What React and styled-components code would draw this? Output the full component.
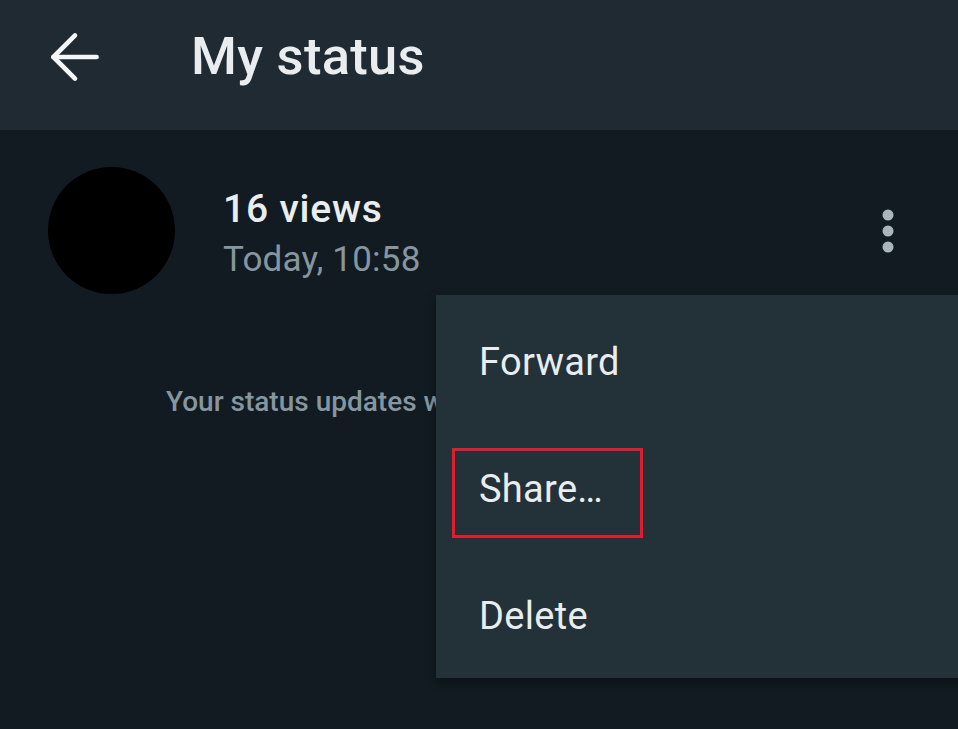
import React from 'react';
import styled, { createGlobalStyle } from 'styled-components';
import { ArrowLeft } from 'lucide-react';

const GlobalStyle = createGlobalStyle`
  html, body {
    margin: 0;
    padding: 0;
    background: #111b21;
    overflow: hidden;
  }
  body {
    font-family: Roboto, "Noto Sans", "Liberation Sans", sans-serif;
  }
`;

//#region styled-components
const Screen = styled.div`
  position: relative;
  width: 958px;
  height: 729px;
  background: #111b21;
  overflow: hidden;
`;
const Header = styled.header`
  display: flex;
  align-items: center;
  height: 130px;
  padding: 0 0 17px 38px;
  box-sizing: border-box;
  background: #1f2a33;
  color: #e9edef;
`;
const BackButton = styled.button`
  display: flex;
  padding: 0;
  border: none;
  background: none;
  color: #f4f6f7;
`;
const Title = styled.h1`
  margin: 0 0 0 79px;
  font-size: 52.5px;
  font-weight: 500;
  line-height: 1;
  letter-spacing: 0.3px;
`;
const StatusRow = styled.div`
  display: flex;
  align-items: center;
  padding: 37px 64px 0 48px;
`;
const Avatar = styled.div`
  width: 127px;
  height: 127px;
  border-radius: 50%;
  background: #000;
  flex-shrink: 0;
`;
const Info = styled.div`
  display: flex;
  flex-direction: column;
  gap: 7px;
  margin: 6px 0 0 48px;
`;
const Views = styled.span`
  font-size: 39px;
  font-weight: 500;
  line-height: 46px;
  letter-spacing: 0.8px;
  color: #e9edef;
`;
const Time = styled.span`
  font-size: 35px;
  line-height: 42px;
  letter-spacing: 0.2px;
  color: #8696a0;
`;
const MoreButton = styled.button`
  display: flex;
  margin-left: auto;
  padding: 0;
  border: none;
  background: none;
`;
const Notice = styled.p`
  margin: 91px 0 0;
  padding-left: 166px;
  font-size: 28px;
  font-weight: 500;
  line-height: 1.2;
  color: #8696a0;
  white-space: nowrap;
`;
const Menu = styled.ul`
  position: absolute;
  top: 295px;
  left: 436px;
  width: 540px;
  margin: 0;
  padding: 4px 0 0;
  height: 383px;
  box-sizing: border-box;
  list-style: none;
  background: #233138;
  box-shadow: 0 4px 10px rgba(0, 0, 0, 0.35);
`;
const MenuItem = styled.li`
  position: relative;
  display: flex;
  align-items: center;
  height: 127px;
  padding-left: 43px;
  font-size: 38px;
  line-height: 1.2;
  letter-spacing: 0.3px;
  color: #e9edef;

  ${({ $highlight }) => $highlight && `
    &::after {
      content: '';
      position: absolute;
      left: 16px;
      top: 22px;
      width: 191px;
      height: 90px;
      box-sizing: border-box;
      border: 3px solid #dc1f2e;
    }
  `}
`;
//#endregion

const MoreIcon = () => (
  <svg width="12" height="44" viewBox="0 0 12 44">
    <circle cx="6" cy="6" r="5.5" fill="#aab5bc" />
    <circle cx="6" cy="22" r="5.5" fill="#aab5bc" />
    <circle cx="6" cy="38" r="5.5" fill="#aab5bc" />
  </svg>
);

const menuItems = ['Forward', 'Share…', 'Delete'];

const App = () => {
  return (
    <Screen>
      <GlobalStyle />
      <Header>
        <BackButton aria-label="Back">
          <ArrowLeft size={74} strokeWidth={1.5} />
        </BackButton>
        <Title>My status</Title>
      </Header>

      <StatusRow>
        <Avatar />
        <Info>
          <Views>16 views</Views>
          <Time>Today, 10:58</Time>
        </Info>
        <MoreButton aria-label="More options">
          <MoreIcon />
        </MoreButton>
      </StatusRow>

      <Notice>Your status updates will disappear after 24 hours.</Notice>

      <Menu>
        {menuItems.map((item) => (
          <MenuItem key={item} $highlight={item === 'Share…'}>{item}</MenuItem>
        ))}
      </Menu>
    </Screen>
  );
};

export default App;
